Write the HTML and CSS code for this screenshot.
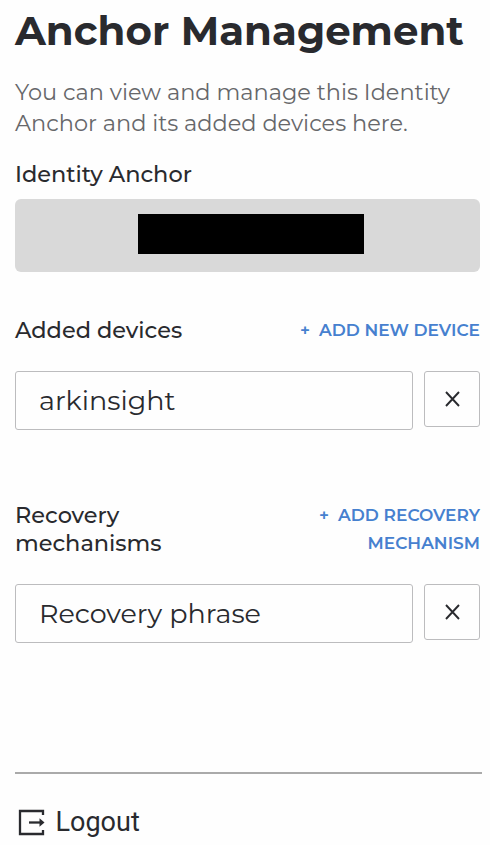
FILE: index.html
```html
<!DOCTYPE html>
<html lang="en">
<head>
<meta charset="utf-8">
<title>Anchor Management</title>
<link rel="stylesheet" href="styles.css">
</head>
<body>
<main class="page">
  <h1 class="title">Anchor Management</h1>
  <p class="intro">You can view and manage this Identity<br>Anchor and its added devices here.</p>
  <h2 class="label label-anchor">Identity Anchor</h2>
  <div class="anchor"><div class="redacted"></div></div>

  <section class="group">
    <header class="head">
      <h2 class="label">Added devices</h2>
      <button class="add"><span class="plus">+</span>ADD NEW DEVICE</button>
    </header>
    <div class="row">
      <div class="field">arkinsight</div>
      <button class="remove" aria-label="Remove device"><svg width="16" height="16" viewBox="0 0 16 16"><path d="M2 1 15 15M15 1 2 15"/></svg></button>
    </div>
  </section>

  <section class="group recovery">
    <header class="head">
      <h2 class="label">Recovery<br>mechanisms</h2>
      <button class="add"><span class="plus">+</span>ADD RECOVERY<br>MECHANISM</button>
    </header>
    <div class="row">
      <div class="field">Recovery phrase</div>
      <button class="remove" aria-label="Remove recovery phrase"><svg width="16" height="16" viewBox="0 0 16 16"><path d="M2 1 15 15M15 1 2 15"/></svg></button>
    </div>
  </section>

  <footer class="footer">
    <button class="logout">
      <svg width="27" height="27" viewBox="0 0 27 27"><path class="door" d="M25 6V2H2v23h23v-4"/><path class="door" d="M11 13.500H23"/><path class="tip" d="M21.500 9.300 26.500 13.500 21.500 17.700Z"/></svg>
      <span>Logout</span>
    </button>
  </footer>
</main>
</body>
</html>
```
FILE: styles.css
```css
* { box-sizing: border-box; }
body {
  margin: 0;
  background: #fefefe;
  color: #292a2e;
  font-family: Montserrat, Inter, "Open Sans", sans-serif;
}
h1, h2, p { margin: 0; font-weight: 500; }
button {
  padding: 0;
  border: 0;
  background: none;
  color: inherit;
  font-family: inherit;
}
.page {
  width: 490px;
  height: 845px;
  padding: 7px 8px 0 15px;
  overflow: hidden;
  white-space: nowrap;
}
.title { font-size: 40.3px; line-height: 48px; font-weight: 700; }
.intro {
  margin-top: 22px;
  color: #66676a;
  font-size: 22.45px;
  line-height: 30.5px;
  font-weight: 400;
}
.label { font-size: 22.45px; line-height: 27.5px; font-weight: 500; }
.label-anchor { margin-top: 23px; }
.anchor {
  display: flex;
  width: 465px;
  height: 73px;
  margin-top: 10px;
  padding: 15px 0 0 123px;
  border-radius: 6px;
  background: #d9d9d9;
}
.redacted { width: 226px; height: 40px; background: #000; }
.group { width: 465px; margin-top: 45px; }
.head { display: flex; justify-content: space-between; align-items: flex-start; }
.add {
  color: #4680cf;
  font-size: 17px;
  line-height: 27.5px;
  font-weight: 600;
  text-align: right;
}
.plus { margin-right: 9px; }
.row { display: flex; align-items: flex-start; gap: 11px; margin-top: 27px; }
.field {
  display: flex;
  align-items: center;
  width: 398px;
  height: 59px;
  padding-left: 23px;
  border: 1px solid #bcbcbe;
  border-radius: 3px;
  font-size: 27px;
  font-weight: 400;
}
.remove {
  display: flex;
  align-items: center;
  justify-content: center;
  width: 56px;
  height: 56px;
  border: 1px solid #bcbcbe;
  border-radius: 3px;
}
.remove path { fill: none; stroke: #292a2e; stroke-width: 1.9; }
.recovery { margin-top: 72px; }
.footer { width: 467px; margin-top: 129px; border-top: 2px solid #aaa; }
.logout {
  display: flex;
  align-items: center;
  gap: 10.5px;
  margin: 32px 0 0 3px;
  font-family: Roboto, sans-serif;
  font-size: 27px;
  line-height: 32px;
}
.door { fill: none; stroke: #292a2e; stroke-width: 2.3; }
.tip { fill: #292a2e; }
```
